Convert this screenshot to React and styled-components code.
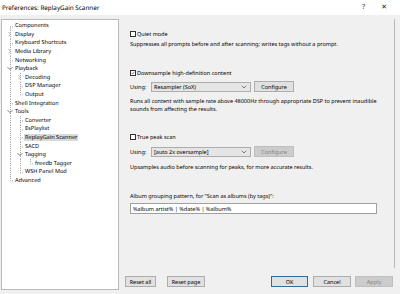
import React from "react";
import styled, { createGlobalStyle } from "styled-components";

const Global = createGlobalStyle`
html, body { margin: 0; padding: 0; background: #f0f0f0; }
body { font-family: 'Noto Sans', 'Liberation Sans', sans-serif; text-rendering: geometricPrecision; }
`

const TREE = [
    { label: "Components", level: 0, rails: [] },
    { label: "Display", level: 0, rails: [], expander: "closed" },
    { label: "Keyboard Shortcuts", level: 0, rails: [] },
    { label: "Media Library", level: 0, rails: [], expander: "closed" },
    { label: "Networking", level: 0, rails: [] },
    { label: "Playback", level: 0, rails: [], expander: "open" },
    { label: "Decoding", level: 1, rails: [0], expander: "closed" },
    { label: "DSP Manager", level: 1, rails: [0] },
    { label: "Output", level: 1, rails: [0], last: true },
    { label: "Shell Integration", level: 0, rails: [] },
    { label: "Tools", level: 0, rails: [], expander: "open" },
    { label: "Converter", level: 1, rails: [0] },
    { label: "EsPlaylist", level: 1, rails: [0] },
    { label: "ReplayGain Scanner", level: 1, rails: [0], selected: true },
    { label: "SACD", level: 1, rails: [0] },
    { label: "Tagging", level: 1, rails: [0], expander: "open" },
    { label: "freedb Tagger", level: 2, rails: [0, 1], last: true },
    { label: "WSH Panel Mod", level: 1, rails: [0], last: true },
    { label: "Advanced", level: 0, rails: [], last: true },
]

const ROW_H = 8.6

// dotted tree guides + expander arrow, drawn left of each label
function Guides({ node, index }) {
    const w = 13 + node.level * 10
    const x = 8 + node.level * 10
    const mid = ROW_H / 2
    const dot = { stroke: "#a8a8a8", strokeWidth: 1, strokeDasharray: "1 1" }
    return (
        <svg width={w} height={ROW_H} style={{ flex: "none" }}>
            {node.rails.map((l) => (
                <line key={l} x1={8.5 + l * 10} x2={8.5 + l * 10} y1={0} y2={ROW_H} {...dot} />
            ))}
            <line x1={x + 0.5} x2={x + 0.5} y1={index === 0 ? mid : 0} y2={node.last ? mid : ROW_H} {...dot} />
            {!node.expander && <line x1={x} x2={w - 1} y1={mid + 0.5} y2={mid + 0.5} {...dot} />}
            {node.expander === "closed" && (
                <path d={`M${x - 1.5} ${mid - 2} L${x + 0.5} ${mid} L${x - 1.5} ${mid + 2}`} fill="none" stroke="#8a8a8a" strokeWidth="0.7" />
            )}
            {node.expander === "open" && (
                <path d={`M${x - 2.5} ${mid - 1.2} L${x} ${mid + 1.3} L${x + 2.5} ${mid - 1.2}`} fill="none" stroke="#404040" strokeWidth="0.7" />
            )}
        </svg>
    )
}

function CheckBox({ checked }) {
    return (
        <Box>
            {checked && (
                <svg width="6" height="6" viewBox="0 0 6 6">
                    <path d="M1 3 L2.4 4.5 L5 1.3" fill="none" stroke="#222" strokeWidth="0.8" />
                </svg>
            )}
        </Box>
    )
}

function Chevron() {
    return (
        <svg width="6" height="4" viewBox="0 0 6 4">
            <path d="M0.8 0.8 L3 3 L5.2 0.8" fill="none" stroke="#555" strokeWidth="0.7" />
        </svg>
    )
}

export default function App() {
    return (
        <Page>
            <Global />
            <TitleBar>
                <h1>Preferences: ReplayGain Scanner</h1>
                <Caption>
                    <span>?</span>
                    <span>✕</span>
                </Caption>
            </TitleBar>
            <Body>
                <Tree>
                    {TREE.map((node, i) => (
                        <Row key={node.label}>
                            <Guides node={node} index={i} />
                            <Label selected={node.selected}>{node.label}</Label>
                        </Row>
                    ))}
                </Tree>
                <Panel>
                    <CheckRow>
                        <CheckBox />
                        <span>Quiet mode</span>
                    </CheckRow>
                    <Text top={2}>Suppresses all prompts before and after scanning; writes tags without a prompt.</Text>

                    <CheckRow top={21}>
                        <CheckBox checked />
                        <span>Downsample high-definition content</span>
                    </CheckRow>
                    <UsingRow top={4}>
                        <UsingLabel>Using:</UsingLabel>
                        <Combo>
                            <span>Resampler (SoX)</span>
                            <Chevron />
                        </Combo>
                        <Button width={40}>Configure</Button>
                    </UsingRow>
                    <Text top={5}>
                        Runs all content with sample rate above 48000Hz through appropriate DSP to prevent inaudible<br />
                        sounds from affecting the results.
                    </Text>

                    <CheckRow top={20}>
                        <CheckBox />
                        <span>True peak scan</span>
                    </CheckRow>
                    <UsingRow top={5}>
                        <UsingLabel>Using:</UsingLabel>
                        <Combo>
                            <span>[auto 2x oversample]</span>
                            <Chevron />
                        </Combo>
                        <Button width={40} disabled>Configure</Button>
                    </UsingRow>
                    <Text top={6}>Upsamples audio before scanning for peaks, for more accurate results.</Text>

                    <Text top={21}>Album grouping pattern, for "Scan as albums (by tags)":</Text>
                    <Input defaultValue="%album artist% | %date% | %album%" />
                </Panel>
                <Footer>
                    <Group>
                        <Button width={31}>Reset all</Button>
                        <Button width={38} gap={11}>Reset page</Button>
                    </Group>
                    <Group>
                        <Button width={37} primary>OK</Button>
                        <Button width={38} gap={5}>Cancel</Button>
                        <Button width={38} gap={4} disabled>Apply</Button>
                    </Group>
                </Footer>
            </Body>
        </Page>
    )
}

const Page = styled.div`
width: 400px;
height: 294px;
overflow: hidden;
background: #f0f0f0;
color: #000;
font-size: 5.5px;
`
const TitleBar = styled.div`
height: 15px;
background: #ffffff;
display: flex;
justify-content: space-between;
align-items: center;
h1{
margin: 0 0 0 2px;
font-family: 'Noto Sans', sans-serif;
font-weight: 400;
font-size: 6.3px;
color: #000;
}
`
const Caption = styled.div`
display: flex;
gap: 16px;
margin-right: 13px;
font-size: 7px;
color: #222;
`
const Body = styled.div`
display: grid;
grid-template-columns: 118px 276px;
grid-template-rows: 249px 22px;
padding: 4px 0 0 1px;
`
const Tree = styled.div`
grid-row: 1 / 3;
background: #ffffff;
border: 1px solid #b9b9b9;
padding-top: 1.5px;
box-sizing: border-box;
height: 271px;
font-size: 5.6px;
`
const Row = styled.div`
height: ${ROW_H}px;
display: flex;
align-items: center;
white-space: nowrap;
`
const Label = styled.span`
line-height: 7px;
padding: 0 1px;
margin-left: -1px;
background: ${(p) => (p.selected ? "#d9d9d9" : "transparent")};
`
const Panel = styled.div`
border-right: 1px solid #b9b9b9;
padding: 11px 0 0 11px;
display: flex;
flex-direction: column;
align-items: flex-start;
white-space: nowrap;
`
const CheckRow = styled.div`
height: 8px;
margin-top: ${(p) => p.top || 0}px;
display: flex;
align-items: center;
gap: 1px;
`
const Box = styled.div`
width: 6px;
height: 6px;
box-sizing: border-box;
border: 0.8px solid #333;
background: #fff;
display: flex;
align-items: center;
justify-content: center;
`
const Text = styled.div`
line-height: 8px;
margin-top: ${(p) => p.top || 0}px;
`
const UsingRow = styled.div`
display: flex;
align-items: center;
margin-top: ${(p) => p.top || 0}px;
`
const UsingLabel = styled.span`
width: 21px;
`
const Combo = styled.div`
width: 100px;
height: 10px;
box-sizing: border-box;
border: 0.8px solid #adadad;
background: #e5e5e5;
display: flex;
align-items: center;
justify-content: space-between;
padding: 0 3px 0 2px;
margin-right: 3px;
`
const Button = styled.div`
width: ${(p) => p.width}px;
height: 11px;
margin-left: ${(p) => p.gap || 0}px;
box-sizing: border-box;
border: 0.8px solid ${(p) => (p.primary ? "#0078d7" : p.disabled ? "#bfbfbf" : "#adadad")};
background: ${(p) => (p.disabled ? "#cccccc" : "#e1e1e1")};
color: ${(p) => (p.disabled ? "#838383" : "#000")};
display: flex;
align-items: center;
justify-content: center;
`
const Input = styled.input`
margin-top: 3px;
width: 247px;
height: 11px;
box-sizing: border-box;
border: 0.8px solid #a0a0a0;
background: #fff;
padding: 0 2px;
font-family: 'Noto Sans', sans-serif;
font-size: 5.5px;
color: #000;
outline: none;
text-rendering: geometricPrecision;
`
const Footer = styled.div`
display: flex;
justify-content: space-between;
align-items: flex-start;
padding: 8px 2px 0 6px;
`
const Group = styled.div`
display: flex;
`
